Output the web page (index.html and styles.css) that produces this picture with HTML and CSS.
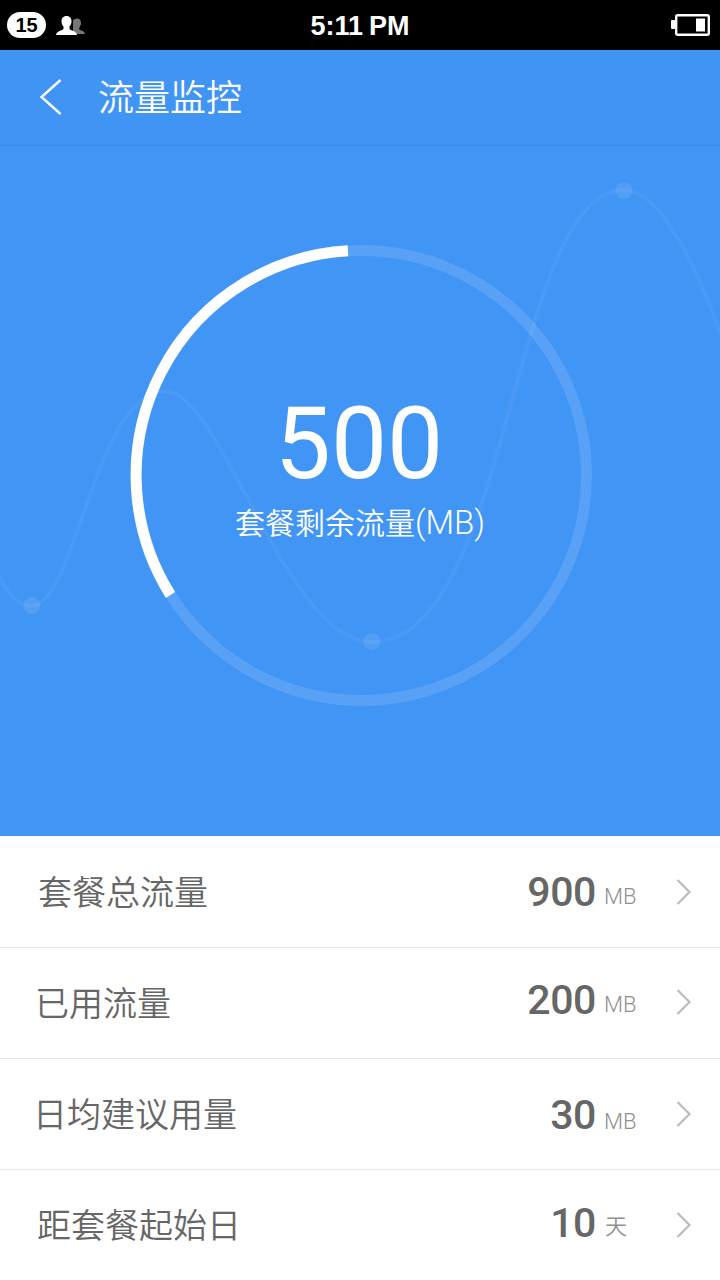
FILE: index.html
```html
<!DOCTYPE html>
<html lang="zh-CN">
<head>
    <meta charset="UTF-8">
    <meta name="viewport" content="width=device-width, initial-scale=1.0">
    <title>流量监控</title>
    <link rel="stylesheet" href="styles.css">
</head>
<body>
<div class="container">
    <div class="status-bar">
        <div class="status-left">
            <span class="badge">15</span>
            <svg class="people" width="30" height="20" viewBox="0 0 30 20">
                <path fill="#777" d="M21 2.500c2.800 0 4 2 4 4.500 0 2-.8 3.300-1.700 4.500v2c2 1.200 5.200 1.500 5.700 4.500H17V4.500c.9-1.300 2.300-2 4-2z"/>
                <path fill="#fff" d="M10.500 0c3.400 0 5 2.300 5 5.300 0 2.400-.8 4-2 5.200v2.500c2.300 1.900 7 2.200 7.500 6H0c.5-3.800 5.200-4.100 7.500-6v-2.500c-1.200-1.200-2-2.800-2-5.200 0-3 1.600-5.300 5-5.300z"/>
            </svg>
        </div>
        <div class="time">5:11<span class="pm">PM</span></div>
        <div class="status-right">
            <svg width="40" height="22" viewBox="0 0 40 22">
                <rect x="5.200" y="1.200" width="32.600" height="19.600" rx="1.500" fill="none" stroke="#fff" stroke-width="2.400"/>
                <rect x="0" y="6" width="4.500" height="9" rx="1" fill="#fff"/>
                <rect x="25" y="4.500" width="9" height="13" fill="#fff"/>
            </svg>
        </div>
    </div>

    <div class="header">
        <svg class="back" width="24" height="38" viewBox="0 0 24 38">
            <path d="M21.500 2L2.500 19L21.500 36" fill="none" stroke="#fff" stroke-width="2.400"/>
        </svg>
        <h1>流量监控</h1>
    </div>

    <div class="chart">
        <!-- usage curve and ring -->
        <svg class="graph" width="720" height="690" viewBox="0 146 720 690">
            <path class="curve" d="M-2 575C8 594 18 606 32 606C75 606 96 391 165 391C222 391 285 642 372 642C512 642 510 190 624 190C657 190 690 250 722 337"/>
            <circle class="dot" cx="32" cy="605.500" r="8.500"/>
            <circle class="dot" cx="372" cy="641.500" r="8.500"/>
            <circle class="dot" cx="624" cy="190.500" r="8.500"/>
            <circle class="ring" cx="361.500" cy="475.500" r="225"/>
            <path class="progress" d="M170.500 595A225 225 0 0 1 348 250.800"/>
        </svg>
        <div class="remaining">500</div>
        <div class="caption">套餐剩余流量<span>(MB)</span></div>
    </div>

    <div class="list">
        <div class="row row-total">
            <div class="label">套餐总流量</div>
            <div class="value">900</div>
            <div class="unit">MB</div>
            <svg class="arrow" width="16" height="28" viewBox="0 0 16 28"><path d="M1.500 2L13.500 14L1.500 26"/></svg>
        </div>
        <div class="row row-used">
            <div class="label">已用流量</div>
            <div class="value">200</div>
            <div class="unit">MB</div>
            <svg class="arrow" width="16" height="28" viewBox="0 0 16 28"><path d="M1.500 2L13.500 14L1.500 26"/></svg>
        </div>
        <div class="row row-daily">
            <div class="label">日均建议用量</div>
            <div class="value">30</div>
            <div class="unit">MB</div>
            <svg class="arrow" width="16" height="28" viewBox="0 0 16 28"><path d="M1.500 2L13.500 14L1.500 26"/></svg>
        </div>
        <div class="row row-start">
            <div class="label">距套餐起始日</div>
            <div class="value">10</div>
            <div class="unit">天</div>
            <svg class="arrow" width="16" height="28" viewBox="0 0 16 28"><path d="M1.500 2L13.500 14L1.500 26"/></svg>
        </div>
    </div>
</div>
</body>
</html>
```
FILE: styles.css
```css
* {
    box-sizing: border-box;
}
body {
    font-family: Roboto, 'Noto Sans CJK SC', sans-serif;
    font-weight: 350;
    background-color: #ffffff;
    color: #666;
    margin: 0;
}
svg {
    display: block;
}
.container {
    width: 720px;
    height: 1280px;
    overflow: hidden;
}
.status-bar {
    height: 50px;
    padding: 0 9px 0 7px;
    background-color: #000;
    color: white;
    font-family: 'Liberation Sans', sans-serif;
    font-weight: bold;
    display: grid;
    grid-template-columns: 1fr auto 1fr;
    align-items: center;
}
.status-left {
    display: flex;
    align-items: center;
    gap: 10px;
}
.people {
    margin-top: 2px;
}
.badge {
    width: 39px;
    height: 26px;
    line-height: 26px;
    border-radius: 13px;
    background-color: white;
    color: #000;
    font-size: 20px;
    text-align: center;
}
.time {
    font-size: 27px;
    line-height: 48px;
    padding-top: 2px;
    padding-left: 2px;
}
.pm {
    margin-left: 6px;
}
.status-right {
    display: flex;
    justify-content: flex-end;
}
.header {
    height: 96px;
    padding-left: 39px;
    background-color: #4094f4;
    border-bottom: 1px solid #3a88e4;
    display: flex;
    align-items: center;
    gap: 35px;
}
.back {
    margin-bottom: 2px;
}
.header h1 {
    margin: 0;
    padding-top: 3px;
    color: white;
    font-size: 36px;
    font-weight: 350;
    line-height: 50px;
}
.chart {
    position: relative;
    height: 690px;
    padding-top: 238px;
    background-color: #4195f5;
    color: white;
    text-align: center;
}
.graph {
    position: absolute;
    top: 0;
    left: 0;
}
.curve {
    fill: none;
    stroke: rgba(255,255,255,0.05);
    stroke-width: 4;
}
.dot {
    fill: rgba(255,255,255,0.09);
}
.ring {
    fill: none;
    stroke: rgba(255,255,255,0.12);
    stroke-width: 11;
}
.progress {
    fill: none;
    stroke: white;
    stroke-width: 11;
}
.remaining {
    position: relative;
    font-size: 100px;
    font-weight: 400;
    line-height: 120px;
    padding-right: 2px;
}
.caption {
    position: relative;
    font-size: 30px;
    line-height: 37px;
}
.caption span {
    font-size: 33px;
    font-weight: 300;
}
.row {
    height: 111px;
    padding: 0 28px 0 38px;
    border-bottom: 1px solid #e5e5e5;
    display: flex;
    align-items: center;
}
.row-total {
    height: 112px;
}
.row-used {
    padding-left: 35px;
}
.row-daily {
    padding-left: 33px;
}
.row-start {
    padding-left: 37px;
    border-bottom: none;
}
.label {
    flex-grow: 1;
    padding-top: 2px;
    font-size: 34px;
    line-height: 48px;
}
.value {
    font-size: 41px;
    font-weight: 500;
    letter-spacing: -0.4px;
    line-height: 48px;
}
.unit {
    width: 72px;
    margin-left: 8px;
    padding-top: 10px;
    color: #909090;
    font-size: 22px;
    font-weight: 300;
    line-height: 30px;
}
.row-used .value {
    margin-bottom: 6px;
}
.row-used .unit {
    padding-top: 3px;
}
.row-used .arrow {
    margin-bottom: 2px;
}
.row-daily .value {
    margin-top: 2px;
}
.row-daily .unit {
    padding-top: 16px;
}
.row-start .value {
    margin-bottom: 6px;
}
.row-start .label,
.row-start .arrow {
    margin-bottom: 2px;
}
.row-start .unit {
    padding-top: 2px;
    padding-left: 1px;
    font-weight: 350;
}
.arrow path {
    fill: none;
    stroke: #bbb;
    stroke-width: 2.2;
}
```
